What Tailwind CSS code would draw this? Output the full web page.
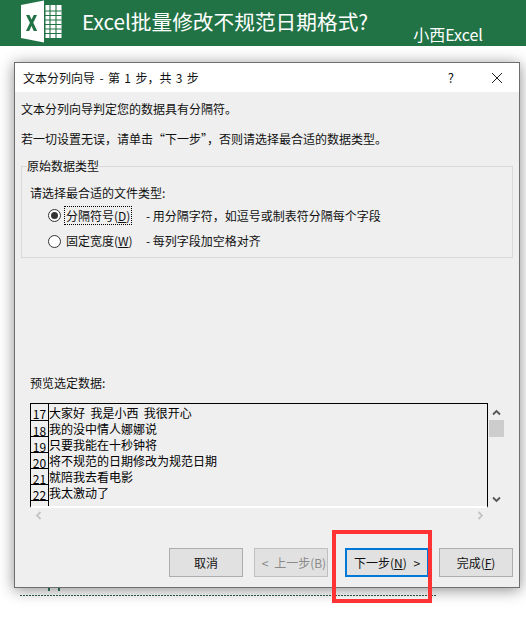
<!DOCTYPE html>
<html><head><meta charset="utf-8"><script src="https://cdn.jsdelivr.net/npm/@tailwindcss/browser@4"></script></head>
<body class="bg-white">
<div class="relative w-[526px] h-[629px] overflow-hidden bg-white text-[#111] text-[12px] leading-[16px] font-['Noto_Sans_CJK_SC','Liberation_Sans',sans-serif]">
  <header class="h-[46px] bg-[#217346] flex text-white">
    <svg class="ml-[20px] w-[42px] h-[43px]" viewBox="0 0 42 43">
      <polygon points="1,5 24,0.5 24,42.500 1,38" fill="#fff"/>
      <rect x="25.500" y="5" width="16" height="33" fill="#fff"/>
      <path d="M25 11H41.500M25 15.500H41.500M25 20H41.500M25 24.500H41.500M25 29H41.500M25 33.500H41.500M30 5V38M36 5V38" stroke="#217346" stroke-width="1.100" fill="none"/>
      <path d="M6 15h3.500l2 4.600 2.200-4.600h3.300l-3.700 7.800 3.900 8.200h-3.500l-2.200-5-2.300 5H6l3.900-8.200z" fill="#217346"/>
    </svg>
    <h1 class="ml-[20px] mt-[6px] text-[20.7px] leading-[30px] font-normal whitespace-nowrap">Excel批量修改不规范日期格式?</h1>
    <span class="ml-[45px] mt-[23px] text-[16px] leading-[22px] whitespace-nowrap">小西Excel</span>
  </header>
  <div class="absolute top-[595px] left-[20px] w-[417px] h-[1px] bg-[repeating-linear-gradient(90deg,#2f5f48_0_2px,transparent_2px_3px)]"></div>
  <div class="absolute left-[48px] top-[587px] flex gap-[8px]"><i class="block w-[2px] h-[4px] bg-[#2f7f68]"></i><i class="block w-[2px] h-[4px] bg-[#2f7f68]"></i></div>
  <main class="relative z-10 ml-[14px] mt-[16px] w-[506px] h-[526px] border border-[#6e6e6e] bg-[#efefef] shadow-[0_2px_14px_rgba(0,0,0,0.45)] flex flex-col">
    <div class="h-[29px] bg-white flex items-center pl-[8px] shrink-0">
      <span class="[word-spacing:1.7px] whitespace-nowrap">文本分列向导 - 第 1 步，共 3 步</span>
      <span class="ml-auto mr-[37px] text-[13px]">?</span>
      <svg class="mr-[16px] w-[12px] h-[12px]" viewBox="0 0 12 12"><path d="M1 1l10 10M11 1L1 11" stroke="#222" fill="none"/></svg>
    </div>
    <div class="pl-[6px] pr-[4px] pt-[9px] flex-1 flex flex-col">
      <p>文本分列向导判定您的数据具有分隔符。</p>
      <p class="mt-[14px]">若一切设置无误，请单击“下一步”，否则请选择最合适的数据类型。</p>
      <fieldset class="relative mt-[19px] w-[492px] h-[92px] border border-[#d9d9d9]">
        <span class="absolute left-[5px] -top-[9px] bg-[#efefef]">原始数据类型</span>
        <p class="pl-[8px] pt-[18px]">请选择最合适的文件类型:</p>
        <div class="flex items-center mt-[5px] pl-[26px] h-[19px]">
          <span class="w-[13px] h-[13px] rounded-full border border-[#333] flex items-center justify-center bg-white"><i class="block w-[7px] h-[7px] rounded-full bg-[#333]"></i></span>
          <span class="ml-[3px] w-[68px] pl-[1px] h-[19px] leading-[17px] border border-dotted border-black whitespace-nowrap">分隔符号(<u>D</u>)</span>
          <span class="ml-[14px] whitespace-nowrap">- 用分隔字符，如逗号或制表符分隔每个字段</span>
        </div>
        <div class="flex items-center mt-[6px] pl-[26px] h-[20px]">
          <span class="w-[13px] h-[13px] rounded-full border border-[#333] bg-white"></span>
          <span class="ml-[3px] w-[68px] pl-[2px] whitespace-nowrap">固定宽度(<u>W</u>)</span>
          <span class="ml-[14px] whitespace-nowrap">- 每列字段加空格对齐</span>
        </div>
      </fieldset>
      <p class="mt-[117px] ml-[9px]">预览选定数据:</p>
      <div class="relative mt-[12px] ml-[9px] w-[475px] h-[105px] flex">
        <div class="w-[458px] h-[105px] border-t border-l border-r border-black border-b-2 border-b-white bg-[#efefef] overflow-hidden flex flex-col text-black">
          <div class="flex h-[17px] shrink-0"><span class="w-[18px] border-r border-b border-black text-center leading-[20px]">17</span><span class="leading-[18px] whitespace-pre">大家好  我是小西  我很开心</span></div>
          <div class="flex h-[16px] shrink-0"><span class="w-[18px] border-r border-b border-black text-center leading-[20px]">18</span><span class="leading-[16px]">我的没中情人娜娜说</span></div>
          <div class="flex h-[16px] shrink-0"><span class="w-[18px] border-r border-b border-black text-center leading-[20px]">19</span><span class="leading-[16px]">只要我能在十秒钟将</span></div>
          <div class="flex h-[16px] shrink-0"><span class="w-[18px] border-r border-b border-black text-center leading-[20px]">20</span><span class="leading-[16px]">将不规范的日期修改为规范日期</span></div>
          <div class="flex h-[16px] shrink-0"><span class="w-[18px] border-r border-b border-black text-center leading-[20px]">21</span><span class="leading-[16px]">就陪我去看电影</span></div>
          <div class="flex h-[16px] shrink-0"><span class="w-[18px] border-r border-b border-black text-center leading-[20px]">22</span><span class="leading-[16px]">我太激动了</span></div>
          <div class="flex h-[8px] shrink-0"><span class="w-[18px] border-r border-black"></span></div>
        </div>
        <div class="ml-[1px] w-[15px] h-[104px] flex flex-col items-center">
          <svg class="mt-[6px] w-[9px] h-[7px]" viewBox="0 0 9 7"><path d="M1 5.500l3.500-3.500 3.500 3.500" stroke="#555" stroke-width="1.800" fill="none"/></svg>
          <div class="mt-[4px] w-[15px] h-[17px] bg-[#cdcdcd]"></div>
          <svg class="mt-[59px] w-[9px] h-[7px]" viewBox="0 0 9 7"><path d="M1 1.500l3.500 3.500 3.500-3.500" stroke="#555" stroke-width="1.800" fill="none"/></svg>
        </div>
        <div class="absolute left-0 top-[108px] w-[459px] flex justify-between pl-[5px] pr-[5px]">
          <svg class="w-[7px] h-[9px]" viewBox="0 0 7 9"><path d="M5.500 1L2 4.500 5.500 8" stroke="#c4c4c4" stroke-width="1.800" fill="none"/></svg>
          <svg class="w-[7px] h-[9px]" viewBox="0 0 7 9"><path d="M1.500 1L5 4.500 1.500 8" stroke="#c4c4c4" stroke-width="1.800" fill="none"/></svg>
        </div>
      </div>
      <div class="mt-[40px] flex ml-[148px]">
        <button class="w-[74px] h-[29px] border border-[#adadad] bg-[#e1e1e1]">取消</button>
        <button class="ml-[11px] w-[74px] h-[29px] pl-[6px] border border-[#bfbfbf] bg-[#e1e1e1] text-[#8a8a8a] whitespace-nowrap [word-spacing:3px]">&lt; 上一步(B)</button>
        <button class="ml-[17px] w-[84px] h-[29px] border-2 border-[#0078d7] bg-[#e1e1e1] whitespace-nowrap [word-spacing:4px]">下一步(<u>N</u>) &gt;</button>
        <button class="ml-[10px] w-[74px] h-[29px] border border-[#adadad] bg-[#e1e1e1] whitespace-nowrap">完成(<u>F</u>)</button>
      </div>
    </div>
  </main>
  <div class="absolute z-20 left-[332px] top-[530px] w-[100px] h-[73px] border-[4px] border-[#ff3333]"></div>
</div>
</body></html>
